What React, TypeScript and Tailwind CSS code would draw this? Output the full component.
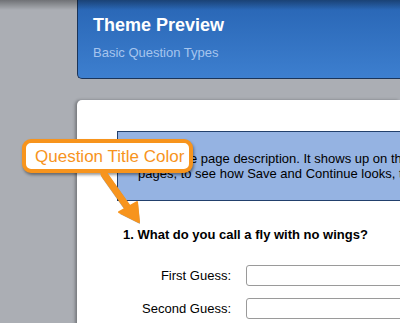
export default function App() {
  return (
    <div className="relative w-[400px] h-[323px] overflow-hidden bg-[#abaeb4] font-['Liberation_Sans',Arial,sans-serif]">
      <div className="pl-[77px]">
        <header className="h-[79px] rounded-bl-[5px] border-l border-b border-[#1b3458] bg-gradient-to-b from-[#2865b4] to-[#3d7fcf] pl-[15px] pt-[14px]">
          <h1 className="text-[18px] leading-[22px] font-bold text-white">Theme Preview</h1>
          <p className="mt-[9px] text-[13px] leading-[15px] text-[#a6c5ee]">Basic Question Types</p>
        </header>

        <main className="mt-[21px] h-[300px] rounded-tl-[5px] bg-white pl-[40px] pt-[31px] shadow-[-2px_0_3px_rgba(0,0,0,0.3)]">
          <div className="w-[420px] border border-[#22406c] bg-[#95b3e2] px-[20px] py-[19px] text-[13px] leading-[15px] text-black whitespace-nowrap">
            <p>This is the page description. It shows up on the top of all</p>
            <p>pages, to see how Save and Continue looks, try it out.</p>
          </div>

          <h2 className="ml-[6px] mt-[26px] text-[13px] leading-[15px] font-bold text-black whitespace-nowrap">
            1. What do you call a fly with no wings?
          </h2>

          <div className="mt-[23px] flex flex-col gap-[12px]">
            {['First Guess:', 'Second Guess:'].map((label) => (
              <div key={label} className="flex items-center">
                <span className="w-[114px] shrink-0 text-right text-[13px] text-black whitespace-nowrap">{label}</span>
                <div className="ml-[15px] h-[21px] w-[200px] shrink-0 rounded-[3px] border border-[#9a9a9a] bg-white" />
              </div>
            ))}
          </div>
        </main>
      </div>

      {/* top edge shading */}
      <div className="pointer-events-none absolute left-0 top-0 h-[10px] w-full bg-gradient-to-b from-[rgba(0,0,0,0.35)] to-transparent" />

      {/* callout */}
      <div className="absolute left-[22px] top-[139px] flex h-[34px] w-[171px] items-center rounded-[9px] border-[4px] border-[#f7941d] bg-white pl-[9px] text-[17px] leading-none text-[#f7941d] shadow-[1px_2px_3px_rgba(0,0,0,0.4)] whitespace-nowrap">
        Question Title Color
      </div>
      <svg className="absolute left-[95px] top-[170px]" width="55" height="60" viewBox="0 0 55 60">
        <g transform="translate(1,2)" opacity="0.35">
          <line x1="9" y1="4" x2="33" y2="38" stroke="#000" strokeWidth="7" strokeLinecap="round" />
          <polygon points="24,42 42,32 44,52" fill="#000" />
        </g>
        <line x1="9" y1="4" x2="33" y2="38" stroke="#f7941d" strokeWidth="7" strokeLinecap="round" />
        <polygon points="24,42 42,32 44,52" fill="#f7941d" stroke="#f7941d" strokeWidth="2" strokeLinejoin="round" />
      </svg>
    </div>
  );
}
